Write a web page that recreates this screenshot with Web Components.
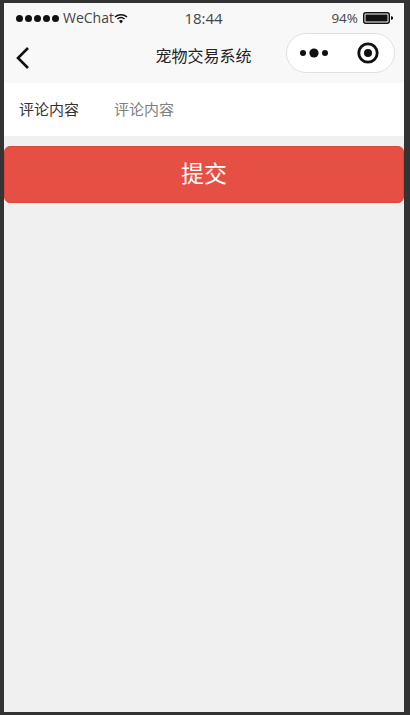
<!DOCTYPE html>
<html>
<head>
<meta charset="utf-8">
<title>宠物交易系统</title>
<style>
html, body { margin: 0; padding: 0; height: 100%; background: #333; overflow: hidden; }
body { font-family: "Open Sans", "Noto Sans CJK SC", sans-serif; }
</style>
</head>
<body>
<phone-frame>
    <status-bar></status-bar>
    <nav-bar title="宠物交易系统"></nav-bar>
    <form-row label="评论内容" placeholder="评论内容"></form-row>
    <submit-button>提交</submit-button>
</phone-frame>
<script>
class PhoneFrame extends HTMLElement {
    constructor() {
        super();
        this.attachShadow({ mode: 'open' });
        this.shadowRoot.innerHTML = `
        <style>
            :host {
                display: block;
                box-sizing: border-box;
                width: 410px;
                height: 715px;
                padding: 3px 6px 3px 4px;
                background: #333;
            }
            #screen {
                height: 100%;
                background: #f0f0f0;
                display: flex;
                flex-direction: column;
            }
        </style>
        <div id="screen"><slot></slot></div>
    `;
    }
}

class StatusBar extends HTMLElement {
    constructor() {
        super();
        this.attachShadow({ mode: 'open' });
        this.shadowRoot.innerHTML = `
        <style>
            :host {
                display: grid;
                grid-template-columns: 1fr auto 1fr;
                align-items: center;
                height: 30px;
                padding: 0 11px 0 12px;
                background: #f8f8f8;
                color: #444;
                font-size: 14px;
                line-height: 28px;
            }
            #left, #right { display: flex; align-items: center; }
            #right { justify-content: flex-end; }
            #dots { display: flex; gap: 2px; margin-right: 4px; }
            #dots i { width: 7px; height: 7px; border-radius: 50%; background: #111; }
            #wifi { margin-left: 0; }
            #time { font-size: 15px; margin-left: -2px; }
            #pct { font-size: 13.5px; margin-right: 5px; }
            #batt { display: block; }
        </style>
        <div id="left">
            <div id="dots"><i></i><i></i><i></i><i></i><i></i></div>
            <span>WeChat</span>
            <svg id="wifi" width="14" height="11" viewBox="0 0 14 11">
                <path d="M1 4 A9 9 0 0 1 13 4" fill="none" stroke="#111" stroke-width="1.6"/>
                <path d="M3.4 6 A5.6 5.6 0 0 1 10.6 6" fill="none" stroke="#111" stroke-width="1.6"/>
                <path d="M5 8 L7 10.5 L9 8 A3 3 0 0 0 5 8 Z" fill="#111"/>
            </svg>
        </div>
        <div id="time">18:44</div>
        <div id="right">
            <span id="pct">94%</span>
            <svg id="batt" width="30" height="12" viewBox="0 0 30 12">
                <rect x="0.75" y="0.75" width="25.5" height="10.5" rx="2" fill="none" stroke="#111" stroke-width="1.5"/>
                <rect x="2.5" y="2.5" width="22" height="7" fill="#111"/>
                <path d="M28 4 L30 5 V7 L28 8 Z" fill="#111"/>
            </svg>
        </div>
    `;
    }
}

class NavBar extends HTMLElement {
    constructor() {
        super();
        this.attachShadow({ mode: 'open' });
        this.shadowRoot.innerHTML = `
        <style>
            :host {
                display: flex;
                align-items: center;
                justify-content: space-between;
                position: relative;
                height: 50px;
                padding: 0 9px 0 11px;
                background: #f8f8f8;
                color: #222;
            }
            #back { display: block; margin-top: -1px; }
            #title {
                position: absolute;
                left: 0;
                right: 1px;
                top: 13px;
                text-align: center;
                font-size: 16px;
                line-height: 20px;
            }
            #capsule {
                position: relative;
                box-sizing: border-box;
                align-self: flex-start;
                width: 109px;
                height: 40px;
                border: 1px solid #e0e0e0;
                border-radius: 20px;
                background: #fff;
                display: flex;
                align-items: center;
                padding: 0 15px 0 13px;
                justify-content: space-between;
            }
        </style>
        <svg id="back" width="16" height="24" viewBox="0 0 16 24">
            <path d="M13 2 L3 12 L13 22" fill="none" stroke="#111" stroke-width="2.6"/>
        </svg>
        <div id="title"></div>
        <div id="capsule">
            <svg width="28" height="10" viewBox="0 0 28 10">
                <circle cx="3" cy="5" r="3" fill="#111"/>
                <circle cx="14" cy="5" r="4.6" fill="#111"/>
                <circle cx="25" cy="5" r="3" fill="#111"/>
            </svg>
            <svg width="22" height="22" viewBox="0 0 22 22">
                <circle cx="11" cy="11" r="9.2" fill="none" stroke="#111" stroke-width="2.8"/>
                <circle cx="11" cy="11" r="4" fill="#111"/>
            </svg>
        </div>
    `;
    }

    connectedCallback() {
        this.shadowRoot.querySelector('#title').textContent = this.getAttribute('title');
    }
}

class FormRow extends HTMLElement {
    constructor() {
        super();
        this.attachShadow({ mode: 'open' });
        this.shadowRoot.innerHTML = `
        <style>
            :host {
                display: flex;
                align-items: center;
                box-sizing: border-box;
                height: 53px;
                padding: 0 0 2px 15px;
                background: #fff;
                font-size: 15px;
                color: #333;
            }
            #label { width: 95px; }
            #hint { color: #808080; }
        </style>
        <span id="label"></span>
        <span id="hint"></span>
    `;
    }

    connectedCallback() {
        this.shadowRoot.querySelector('#label').textContent = this.getAttribute('label');
        this.shadowRoot.querySelector('#hint').textContent = this.getAttribute('placeholder');
    }
}

class SubmitButton extends HTMLElement {
    constructor() {
        super();
        this.attachShadow({ mode: 'open' });
        this.shadowRoot.innerHTML = `
        <style>
            :host {
                display: flex;
                align-items: center;
                justify-content: center;
                box-sizing: border-box;
                height: 57px;
                margin-top: 10px;
                padding-bottom: 5px;
                border: 1px solid #d9473b;
                border-radius: 6px;
                background: #e64f43;
                color: #fff;
                font-size: 23px;
            }
        </style>
        <slot></slot>
    `;
    }
}

customElements.define('phone-frame', PhoneFrame);
customElements.define('status-bar', StatusBar);
customElements.define('nav-bar', NavBar);
customElements.define('form-row', FormRow);
customElements.define('submit-button', SubmitButton);
</script>
</body>
</html>
